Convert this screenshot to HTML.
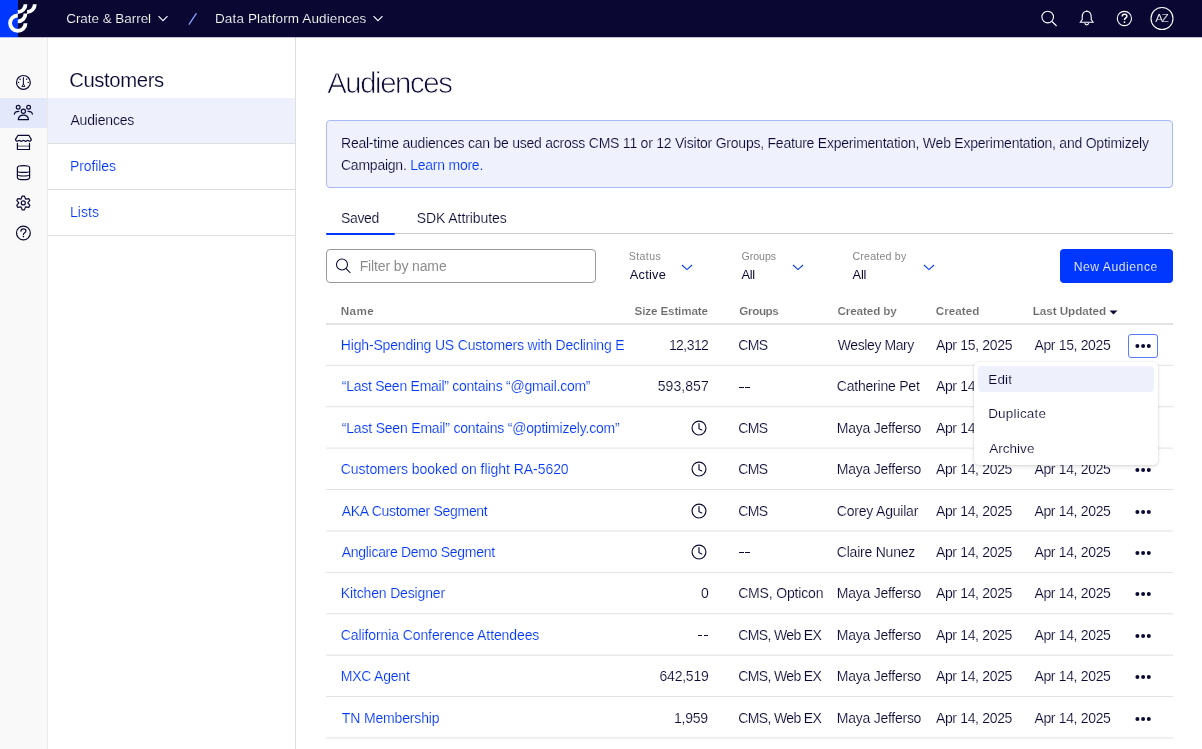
<!DOCTYPE html><html><head><meta charset="utf-8"><title>Audiences</title><style>
*{margin:0;padding:0;box-sizing:border-box}
body{will-change:transform}
html,body{width:1202px;height:749px;overflow:hidden;background:#fff;font-family:"Liberation Sans",sans-serif;position:relative}
.t{position:absolute;line-height:1;white-space:nowrap;-webkit-text-stroke:var(--sw,0.15px) var(--sc,#fff)}
.ab{position:absolute}
.hl{position:absolute;height:1px}
.clip{position:absolute;overflow:hidden}
#hdr{position:absolute;left:0;top:0;width:1202px;height:37px;background:#0a0833}
#logo{position:absolute;left:0;top:0;width:40px;height:37px;background:linear-gradient(90deg,#0037ff 0,#0037ff 18px,transparent 18px)}
#logo svg{position:absolute;left:0;top:0}
#rail{position:absolute;left:0;top:37px;width:48px;height:712px;background:#f9f9f9;border-right:1px solid #eaeaea}
#railsel{position:absolute;left:0;top:97.5px;width:47px;height:30px;background:#e4e8fb}
#side{position:absolute;left:48px;top:37px;width:248px;height:712px;background:#fff;border-right:1px solid #dedede}
#sidesel{position:absolute;left:48px;top:97.5px;width:247px;height:45px;background:#eef1fc}
#banner{position:absolute;left:326px;top:120px;width:847px;height:68px;background:#eff2fd;border:1px solid #a8b9f7;border-radius:4px}
#search{position:absolute;left:326px;top:249px;width:269.5px;height:34px;border:1px solid #9a9a9a;border-radius:4px;background:#fff}
#newbtn{position:absolute;left:1059.5px;top:249.3px;width:113.6px;height:33.5px;background:#0037ff;border-radius:4px}
#menu{position:absolute;left:974px;top:361.8px;width:184px;height:103.6px;background:#fff;border-radius:5px;box-shadow:0 0 0 1px rgba(0,0,0,0.035),0 2px 4px rgba(0,0,0,0.11)}
#menusel{position:absolute;left:3.6px;top:4px;width:176.5px;height:26px;background:#eef1fc;border-radius:4px}
</style></head><body><div id="hdr"></div><div class="hl" style="left:18px;top:37px;width:1184px;background:rgba(10,8,51,0.24);z-index:5"></div><div class="hl" style="left:0;top:37px;width:18px;background:rgba(0,55,255,0.3);z-index:5"></div>
<div id="logo"><svg width="40" height="37" viewBox="0 0 40 37"><g fill="none" stroke="#fff" stroke-width="3.8"><path d="M17.8 15.5 A7.7 7.7 0 1 0 25.5 23.2"/><path d="M17.8 21.3 A7.7 7.7 0 0 0 25.5 13.6"/><path d="M17.8 12.0 A7.7 7.7 0 0 0 25.5 4.3"/><path d="M27.1 12.0 A7.7 7.7 0 0 0 34.8 4.3"/></g></svg></div>
<div class="t" style="left:66.20px;top:11.87px;font-size:13.5px;letter-spacing:-0.046px;color:#fff;font-weight:400;--sc:#0a0833">Crate &amp; Barrel</div>
<svg class="ab" style="left:157px;top:14px" width="12" height="9" viewBox="0 0 12 9"><path d="M1.5 2.2 L6 6.7 L10.5 2.2" fill="none" stroke="#fff" stroke-width="1.1"/></svg>
<svg class="ab" style="left:187px;top:12px" width="12" height="14" viewBox="0 0 12 14"><path d="M2.2 12.2 L9.2 1.7" fill="none" stroke="#8aa2ff" stroke-width="1.3" stroke-linecap="round"/></svg>
<div class="t" style="left:215.00px;top:11.87px;font-size:13.5px;letter-spacing:0.123px;color:#fff;font-weight:400;--sc:#0a0833">Data Platform Audiences</div>
<svg class="ab" style="left:372px;top:14px" width="12" height="9" viewBox="0 0 12 9"><path d="M1.5 2.2 L6 6.7 L10.5 2.2" fill="none" stroke="#fff" stroke-width="1.1"/></svg>
<svg class="ab" style="left:1036px;top:4px" width="64" height="28" viewBox="1036 4 64 28"><g fill="none" stroke="#fff" stroke-width="1.1"><circle cx="1047.7" cy="17.05" r="5.8"/><path d="M1052 21.5 L1056.6 26"/><path d="M1086.7 11.2 C1083.3 11.2 1082.2 14 1082.2 17.5 L1082.2 19.5 L1080.3 22.3 L1093.1 22.3 L1091.2 19.5 L1091.2 17.5 C1091.2 14 1090.1 11.2 1086.7 11.2 Z"/><path d="M1084.9 23.1 A1.8 1.8 0 0 0 1088.5 23.1"/><path d="M1086.7 10.6 L1086.7 11.4" stroke-width="1.4"/></g></svg>
<svg class="ab" style="left:1110px;top:2px" width="70" height="34" viewBox="1110 2 70 34"><g fill="none" stroke="#fff" stroke-width="1.1"><circle cx="1124.4" cy="18.5" r="7.1"/><circle cx="1162" cy="18.5" r="11"/><path d="M1122.2 16.5 C1122.2 15 1123.1 14.3 1124.5 14.3 C1126 14.3 1126.9 15.1 1126.9 16.2 C1126.9 17.9 1124.5 18 1124.5 19.8 L1124.5 20.1" stroke-width="1.45"/></g><circle cx="1124.5" cy="22.1" r="0.95" fill="#fff"/></svg>
<div class="t" style="left:1155.30px;top:12.71px;font-size:11.8px;letter-spacing:-1.600px;color:#fff;font-weight:400;--sc:#0a0833">AZ</div>
<div id="rail"></div><div id="railsel"></div>
<svg class="ab" style="left:0;top:60px" width="47" height="190" viewBox="0 60 47 190"><g fill="none" stroke="#0a0933" stroke-width="1.2" stroke-linecap="round" stroke-linejoin="round"><circle cx="23.4" cy="82.4" r="6.9"/><path d="M23.4 77.6 L23.4 84.0" stroke-width="1.05"/><path d="M22.05 86.2 L23.4 84.0 L24.75 86.2 Z" stroke-width="0.9"/><circle cx="18.2" cy="107.3" r="1.9"/><circle cx="28.6" cy="107.3" r="1.9"/><circle cx="23.4" cy="111.3" r="2.1"/><path d="M14.4 114.1 C14.6 112.2 16.2 111.3 18.8 111.3"/><path d="M28 111.3 C30.6 111.3 32.2 112.2 32.4 114.1"/><path d="M18.3 119.6 C18.6 116.5 20.6 115.1 23.4 115.1 C26.2 115.1 28.2 116.5 28.5 119.6 Z"/><path d="M18 135.3 L28.8 135.3 L31.3 139.4 C31.2 140.6 30.3 141.4 29.1 141.2 C28.6 140.7 28.2 140.3 27.6 140.3 C27 140.3 26.6 141.3 25.6 141.3 C24.6 141.3 24.2 140.3 23.4 140.3 C22.6 140.3 22.2 141.3 21.2 141.3 C20.2 141.3 19.8 140.3 19.2 140.3 C18.6 140.3 18.2 140.7 17.7 141.2 C16.5 141.4 15.6 140.6 15.5 139.4 Z"/><path d="M17.4 143.4 L17.4 149.5 L29.5 149.5 L29.5 143.4"/><path d="M17.6 146.2 L29.3 146.2" stroke-opacity="0.55"/><path d="M17.4 167.5 C17.4 164.9 29.6 164.9 29.6 167.5 L29.6 177.7 C29.6 180.3 17.4 180.3 17.4 177.7 Z"/><path d="M17.4 171.2 C17.4 172.8 29.6 172.8 29.6 171.2"/><path d="M17.4 174.8 C17.4 176.4 29.6 176.4 29.6 174.8"/><path d="M22.20 196.04 L24.40 196.04 L25.55 199.05 L28.74 198.54 L29.84 200.44 L27.80 202.95 L29.84 205.46 L28.74 207.36 L25.55 206.85 L24.40 209.86 L22.20 209.86 L21.05 206.85 L17.86 207.36 L16.76 205.46 L18.80 202.95 L16.76 200.44 L17.86 198.54 L21.05 199.05 Z"/><circle cx="23.3" cy="202.9" r="2.0"/><circle cx="23.4" cy="233" r="6.9"/><path d="M20.9 231.2 C20.9 229.6 22 228.9 23.5 228.9 C25 228.9 25.9 229.8 25.9 230.9 C25.9 232.6 23.4 232.9 23.4 234.6"/></g><circle cx="20.1" cy="79.2" r="0.7" fill="#0a0933"/><circle cx="26.7" cy="79.2" r="0.7" fill="#0a0933"/><circle cx="18.6" cy="82.4" r="0.7" fill="#0a0933"/><circle cx="28.2" cy="82.4" r="0.7" fill="#0a0933"/><circle cx="23.4" cy="236.6" r="0.8" fill="#0a0933"/></svg>
<div id="side"></div><div id="sidesel"></div>
<div class="hl" style="left:48px;width:247px;top:142.5px;background:#dedede"></div>
<div class="hl" style="left:48px;width:247px;top:188.5px;background:#dedede"></div>
<div class="hl" style="left:48px;width:247px;top:234.5px;background:#dedede"></div>
<div class="t" style="left:69.20px;top:70.02px;font-size:20.3px;letter-spacing:-0.388px;color:#0a0933;font-weight:400;">Customers</div>
<div class="t" style="left:70.40px;top:113.15px;font-size:14px;letter-spacing:-0.175px;color:#0a0933;font-weight:400;--sc:#eef1fc">Audiences</div>
<div class="t" style="left:69.90px;top:159.15px;font-size:14px;letter-spacing:-0.071px;color:#0037ff;font-weight:400;">Profiles</div>
<div class="t" style="left:69.90px;top:205.05px;font-size:14px;letter-spacing:0.075px;color:#0037ff;font-weight:400;">Lists</div>
<div class="t" style="left:327.20px;top:67.70px;font-size:29.3px;letter-spacing:-1.400px;color:#0a0933;font-weight:400;--sw:0.75px">Audiences</div>
<div id="banner"></div>
<div class="t" style="left:341.00px;top:135.85px;font-size:14px;letter-spacing:-0.231px;color:#0a0933;font-weight:400;--sc:#eff2fd">Real-time audiences can be used across CMS 11 or 12 Visitor Groups, Feature Experimentation, Web Experimentation, and Optimizely</div>
<div class="t" style="left:341.00px;top:158.35px;font-size:14px;letter-spacing:-0.240px;color:#0a0933;font-weight:400;--sc:#eff2fd">Campaign. <span style="color:#0037ff">Learn more.</span></div>
<div class="t" style="left:341.00px;top:211.05px;font-size:14px;letter-spacing:-0.350px;color:#0a0933;font-weight:400;">Saved</div>
<div class="t" style="left:416.80px;top:211.05px;font-size:14px;letter-spacing:-0.085px;color:#0a0933;font-weight:400;">SDK Attributes</div>
<div class="hl" style="left:326px;width:847px;top:233px;background:#cfcfcf"></div>
<div class="ab" style="left:326px;width:69px;top:233px;height:2px;background:#0037ff;border-radius:1px"></div>
<div id="search"></div>
<svg class="ab" style="left:332px;top:255px" width="22" height="22" viewBox="332 255 22 22"><g fill="none" stroke="#0a0933" stroke-width="1.05"><circle cx="342" cy="264.5" r="5.5"/><path d="M345.9 268.4 L350.4 273"/></g></svg>
<div class="t" style="left:359.70px;top:259.25px;font-size:14px;letter-spacing:-0.131px;color:#8c8c8c;font-weight:400;--sw:0px">Filter by name</div>
<div class="t" style="left:628.70px;top:250.73px;font-size:10.6px;letter-spacing:0.420px;color:#868686;font-weight:400;--sw:0px">Status</div>
<div class="t" style="left:629.70px;top:269.26px;font-size:12.8px;letter-spacing:0.260px;color:#0a0933;font-weight:400;--sw:0px">Active</div>
<svg class="ab" style="left:681px;top:262px" width="12" height="9" viewBox="0 0 12 9"><path d="M1 3 L6 7.6 L11 3" fill="none" stroke="#0037ff" stroke-width="1.05"/></svg>
<div class="t" style="left:741.50px;top:250.73px;font-size:10.6px;letter-spacing:-0.020px;color:#868686;font-weight:400;--sw:0px">Groups</div>
<div class="t" style="left:741.50px;top:269.26px;font-size:12.8px;letter-spacing:-0.350px;color:#0a0933;font-weight:400;--sw:0px">All</div>
<svg class="ab" style="left:792px;top:262px" width="12" height="9" viewBox="0 0 12 9"><path d="M1 3 L6 7.6 L11 3" fill="none" stroke="#0037ff" stroke-width="1.05"/></svg>
<div class="t" style="left:852.50px;top:250.73px;font-size:10.6px;letter-spacing:0.211px;color:#868686;font-weight:400;--sw:0px">Created by</div>
<div class="t" style="left:852.50px;top:269.26px;font-size:12.8px;letter-spacing:-0.150px;color:#0a0933;font-weight:400;--sw:0px">All</div>
<svg class="ab" style="left:923px;top:262px" width="12" height="9" viewBox="0 0 12 9"><path d="M1 3 L6 7.6 L11 3" fill="none" stroke="#0037ff" stroke-width="1.05"/></svg>
<div id="newbtn"></div>
<div class="t" style="left:1073.70px;top:260.67px;font-size:12.2px;letter-spacing:0.518px;color:#fff;font-weight:400;--sc:#0037ff">New Audience</div>
<div class="t" style="left:340.80px;top:305.30px;font-size:11.7px;letter-spacing:0.333px;color:#6b6b6b;font-weight:700;">Name</div>
<div class="t" style="left:634.50px;top:305.30px;font-size:11.7px;letter-spacing:-0.150px;color:#6b6b6b;font-weight:700;">Size Estimate</div>
<div class="t" style="left:739.30px;top:305.30px;font-size:11.7px;letter-spacing:-0.400px;color:#6b6b6b;font-weight:700;">Groups</div>
<div class="t" style="left:837.50px;top:305.30px;font-size:11.7px;letter-spacing:-0.122px;color:#6b6b6b;font-weight:700;">Created by</div>
<div class="t" style="left:935.70px;top:305.30px;font-size:11.7px;letter-spacing:0.033px;color:#6b6b6b;font-weight:700;">Created</div>
<div class="t" style="left:1032.80px;top:305.30px;font-size:11.7px;letter-spacing:-0.073px;color:#6b6b6b;font-weight:700;">Last Updated</div>
<svg class="ab" style="left:1108px;top:308px" width="11" height="8" viewBox="0 0 11 8"><path d="M1.5 2.5 L9.5 2.5 L5.5 6.5 Z" fill="#0a0933"/></svg>
<div class="ab" style="left:326px;width:847px;top:323px;height:2px;background:#e3e3e3"></div>
<div class="hl" style="left:326px;width:847px;top:364px;background:rgba(0,0,0,0.023)"></div>
<div class="hl" style="left:326px;width:847px;top:365px;background:rgba(0,0,0,0.092)"></div>
<div class="clip" style="left:326px;width:299px;top:324.80px;height:35px"><div class="t" style="left:14.80px;top:13.15px;font-size:14px;letter-spacing:-0.171px;color:#0037ff;font-weight:400;">High-Spending US Customers with Declining Engagement</div></div>
<div class="t" style="left:668.90px;top:337.95px;font-size:14px;letter-spacing:-0.560px;color:#0a0933;font-weight:400;">12,312</div>
<div class="clip" style="left:723.5px;width:99px;top:324.80px;height:35px"><div class="t" style="left:14.70px;top:13.15px;font-size:14px;letter-spacing:-0.650px;color:#0a0933;font-weight:400;">CMS</div></div>
<div class="clip" style="left:822.5px;width:98px;top:324.80px;height:35px"><div class="t" style="left:15.30px;top:13.15px;font-size:14px;letter-spacing:-0.410px;color:#0a0933;font-weight:400;">Wesley Mary</div></div>
<div class="t" style="left:935.90px;top:337.95px;font-size:14px;letter-spacing:-0.327px;color:#0a0933;font-weight:400;">Apr 15, 2025</div>
<div class="t" style="left:1034.40px;top:337.95px;font-size:14px;letter-spacing:-0.345px;color:#0a0933;font-weight:400;">Apr 15, 2025</div>
<svg class="ab" style="left:1130px;top:340.90px" width="26" height="10" viewBox="1130 0 26 10"><g fill="#0a0933"><circle cx="1137.4" cy="5" r="2"/><circle cx="1143.1" cy="5" r="2"/><circle cx="1148.8" cy="5" r="2"/></g></svg>
<div class="hl" style="left:326px;width:847px;top:406px;background:rgba(0,0,0,0.091)"></div>
<div class="hl" style="left:326px;width:847px;top:407px;background:rgba(0,0,0,0.024)"></div>
<div class="clip" style="left:326px;width:299px;top:366.20px;height:35px"><div class="t" style="left:15.80px;top:13.15px;font-size:14px;letter-spacing:-0.258px;color:#0037ff;font-weight:400;">“Last Seen Email” contains “@gmail.com”</div></div>
<div class="t" style="left:657.70px;top:379.35px;font-size:14px;letter-spacing:0.067px;color:#0a0933;font-weight:400;">593,857</div>
<div class="ab" style="left:739.30px;top:387.00px;width:4.6px;height:1.1px;background:#0a0933"></div><div class="ab" style="left:745.30px;top:387.00px;width:4.6px;height:1.1px;background:#0a0933"></div>
<div class="clip" style="left:822.5px;width:98px;top:366.20px;height:35px"><div class="t" style="left:14.30px;top:13.15px;font-size:14px;letter-spacing:-0.217px;color:#0a0933;font-weight:400;">Catherine Pet</div></div>
<div class="t" style="left:935.90px;top:379.35px;font-size:14px;letter-spacing:-0.336px;color:#0a0933;font-weight:400;">Apr 14, 2025</div>
<div class="t" style="left:1034.40px;top:379.35px;font-size:14px;letter-spacing:-0.336px;color:#0a0933;font-weight:400;">Apr 14, 2025</div>
<svg class="ab" style="left:1130px;top:382.30px" width="26" height="10" viewBox="1130 0 26 10"><g fill="#0a0933"><circle cx="1137.4" cy="5" r="2"/><circle cx="1143.1" cy="5" r="2"/><circle cx="1148.8" cy="5" r="2"/></g></svg>
<div class="hl" style="left:326px;width:847px;top:447px;background:rgba(0,0,0,0.044)"></div>
<div class="hl" style="left:326px;width:847px;top:448px;background:rgba(0,0,0,0.071)"></div>
<div class="clip" style="left:326px;width:299px;top:407.60px;height:35px"><div class="t" style="left:15.80px;top:13.15px;font-size:14px;letter-spacing:-0.195px;color:#0037ff;font-weight:400;">“Last Seen Email” contains “@optimizely.com”</div></div>
<svg class="ab" style="left:689.45px;top:417.90px" width="20" height="20" viewBox="-10 -10 20 20"><g fill="none" stroke="#0a0933" stroke-width="1.15" stroke-linecap="round"><circle cx="0" cy="0" r="6.95"/><path d="M0 -4.5 L0 0.7 L2.8 2.0"/></g></svg>
<div class="clip" style="left:723.5px;width:99px;top:407.60px;height:35px"><div class="t" style="left:14.70px;top:13.15px;font-size:14px;letter-spacing:-0.650px;color:#0a0933;font-weight:400;">CMS</div></div>
<div class="clip" style="left:822.5px;width:98px;top:407.60px;height:35px"><div class="t" style="left:14.30px;top:13.15px;font-size:14px;letter-spacing:-0.255px;color:#0a0933;font-weight:400;">Maya Jefferson</div></div>
<div class="t" style="left:935.90px;top:420.75px;font-size:14px;letter-spacing:-0.336px;color:#0a0933;font-weight:400;">Apr 14, 2025</div>
<div class="t" style="left:1034.40px;top:420.75px;font-size:14px;letter-spacing:-0.336px;color:#0a0933;font-weight:400;">Apr 14, 2025</div>
<svg class="ab" style="left:1130px;top:423.70px" width="26" height="10" viewBox="1130 0 26 10"><g fill="#0a0933"><circle cx="1137.4" cy="5" r="2"/><circle cx="1143.1" cy="5" r="2"/><circle cx="1148.8" cy="5" r="2"/></g></svg>
<div class="hl" style="left:326px;width:847px;top:489px;background:rgba(0,0,0,0.112)"></div>
<div class="hl" style="left:326px;width:847px;top:490px;background:rgba(0,0,0,0.003)"></div>
<div class="clip" style="left:326px;width:299px;top:449.00px;height:35px"><div class="t" style="left:14.80px;top:13.15px;font-size:14px;letter-spacing:-0.052px;color:#0037ff;font-weight:400;">Customers booked on flight RA-5620</div></div>
<svg class="ab" style="left:689.45px;top:459.30px" width="20" height="20" viewBox="-10 -10 20 20"><g fill="none" stroke="#0a0933" stroke-width="1.15" stroke-linecap="round"><circle cx="0" cy="0" r="6.95"/><path d="M0 -4.5 L0 0.7 L2.8 2.0"/></g></svg>
<div class="clip" style="left:723.5px;width:99px;top:449.00px;height:35px"><div class="t" style="left:14.70px;top:13.15px;font-size:14px;letter-spacing:-0.650px;color:#0a0933;font-weight:400;">CMS</div></div>
<div class="clip" style="left:822.5px;width:98px;top:449.00px;height:35px"><div class="t" style="left:14.30px;top:13.15px;font-size:14px;letter-spacing:-0.255px;color:#0a0933;font-weight:400;">Maya Jefferson</div></div>
<div class="t" style="left:935.90px;top:462.15px;font-size:14px;letter-spacing:-0.336px;color:#0a0933;font-weight:400;">Apr 14, 2025</div>
<div class="t" style="left:1034.40px;top:462.15px;font-size:14px;letter-spacing:-0.336px;color:#0a0933;font-weight:400;">Apr 14, 2025</div>
<svg class="ab" style="left:1130px;top:465.10px" width="26" height="10" viewBox="1130 0 26 10"><g fill="#0a0933"><circle cx="1137.4" cy="5" r="2"/><circle cx="1143.1" cy="5" r="2"/><circle cx="1148.8" cy="5" r="2"/></g></svg>
<div class="hl" style="left:326px;width:847px;top:530px;background:rgba(0,0,0,0.064)"></div>
<div class="hl" style="left:326px;width:847px;top:531px;background:rgba(0,0,0,0.051)"></div>
<div class="clip" style="left:326px;width:299px;top:490.40px;height:35px"><div class="t" style="left:15.80px;top:13.15px;font-size:14px;letter-spacing:-0.305px;color:#0037ff;font-weight:400;">AKA Customer Segment</div></div>
<svg class="ab" style="left:689.45px;top:500.70px" width="20" height="20" viewBox="-10 -10 20 20"><g fill="none" stroke="#0a0933" stroke-width="1.15" stroke-linecap="round"><circle cx="0" cy="0" r="6.95"/><path d="M0 -4.5 L0 0.7 L2.8 2.0"/></g></svg>
<div class="clip" style="left:723.5px;width:99px;top:490.40px;height:35px"><div class="t" style="left:14.70px;top:13.15px;font-size:14px;letter-spacing:-0.650px;color:#0a0933;font-weight:400;">CMS</div></div>
<div class="clip" style="left:822.5px;width:98px;top:490.40px;height:35px"><div class="t" style="left:14.30px;top:13.15px;font-size:14px;letter-spacing:-0.208px;color:#0a0933;font-weight:400;">Corey Aguilar</div></div>
<div class="t" style="left:935.90px;top:503.55px;font-size:14px;letter-spacing:-0.336px;color:#0a0933;font-weight:400;">Apr 14, 2025</div>
<div class="t" style="left:1034.40px;top:503.55px;font-size:14px;letter-spacing:-0.336px;color:#0a0933;font-weight:400;">Apr 14, 2025</div>
<svg class="ab" style="left:1130px;top:506.50px" width="26" height="10" viewBox="1130 0 26 10"><g fill="#0a0933"><circle cx="1137.4" cy="5" r="2"/><circle cx="1143.1" cy="5" r="2"/><circle cx="1148.8" cy="5" r="2"/></g></svg>
<div class="hl" style="left:326px;width:847px;top:571px;background:rgba(0,0,0,0.017)"></div>
<div class="hl" style="left:326px;width:847px;top:572px;background:rgba(0,0,0,0.098)"></div>
<div class="clip" style="left:326px;width:299px;top:531.80px;height:35px"><div class="t" style="left:15.80px;top:13.15px;font-size:14px;letter-spacing:-0.300px;color:#0037ff;font-weight:400;">Anglicare Demo Segment</div></div>
<svg class="ab" style="left:689.45px;top:542.10px" width="20" height="20" viewBox="-10 -10 20 20"><g fill="none" stroke="#0a0933" stroke-width="1.15" stroke-linecap="round"><circle cx="0" cy="0" r="6.95"/><path d="M0 -4.5 L0 0.7 L2.8 2.0"/></g></svg>
<div class="ab" style="left:739.30px;top:552.00px;width:4.6px;height:1.1px;background:#0a0933"></div><div class="ab" style="left:745.30px;top:552.00px;width:4.6px;height:1.1px;background:#0a0933"></div>
<div class="clip" style="left:822.5px;width:98px;top:531.80px;height:35px"><div class="t" style="left:14.30px;top:13.15px;font-size:14px;letter-spacing:-0.218px;color:#0a0933;font-weight:400;">Claire Nunez</div></div>
<div class="t" style="left:935.90px;top:544.95px;font-size:14px;letter-spacing:-0.336px;color:#0a0933;font-weight:400;">Apr 14, 2025</div>
<div class="t" style="left:1034.40px;top:544.95px;font-size:14px;letter-spacing:-0.336px;color:#0a0933;font-weight:400;">Apr 14, 2025</div>
<svg class="ab" style="left:1130px;top:547.90px" width="26" height="10" viewBox="1130 0 26 10"><g fill="#0a0933"><circle cx="1137.4" cy="5" r="2"/><circle cx="1143.1" cy="5" r="2"/><circle cx="1148.8" cy="5" r="2"/></g></svg>
<div class="hl" style="left:326px;width:847px;top:613px;background:rgba(0,0,0,0.085)"></div>
<div class="hl" style="left:326px;width:847px;top:614px;background:rgba(0,0,0,0.030)"></div>
<div class="clip" style="left:326px;width:299px;top:573.20px;height:35px"><div class="t" style="left:14.80px;top:13.15px;font-size:14px;letter-spacing:-0.153px;color:#0037ff;font-weight:400;">Kitchen Designer</div></div>
<div class="t" style="left:701.10px;top:586.35px;font-size:14px;letter-spacing:-0.247px;color:#0a0933;font-weight:400;">0</div>
<div class="clip" style="left:723.5px;width:99px;top:573.20px;height:35px"><div class="t" style="left:14.70px;top:13.15px;font-size:14px;letter-spacing:-0.173px;color:#0a0933;font-weight:400;">CMS, Opticon</div></div>
<div class="clip" style="left:822.5px;width:98px;top:573.20px;height:35px"><div class="t" style="left:14.30px;top:13.15px;font-size:14px;letter-spacing:-0.255px;color:#0a0933;font-weight:400;">Maya Jefferson</div></div>
<div class="t" style="left:935.90px;top:586.35px;font-size:14px;letter-spacing:-0.336px;color:#0a0933;font-weight:400;">Apr 14, 2025</div>
<div class="t" style="left:1034.40px;top:586.35px;font-size:14px;letter-spacing:-0.336px;color:#0a0933;font-weight:400;">Apr 14, 2025</div>
<svg class="ab" style="left:1130px;top:589.30px" width="26" height="10" viewBox="1130 0 26 10"><g fill="#0a0933"><circle cx="1137.4" cy="5" r="2"/><circle cx="1143.1" cy="5" r="2"/><circle cx="1148.8" cy="5" r="2"/></g></svg>
<div class="hl" style="left:326px;width:847px;top:654px;background:rgba(0,0,0,0.038)"></div>
<div class="hl" style="left:326px;width:847px;top:655px;background:rgba(0,0,0,0.077)"></div>
<div class="clip" style="left:326px;width:299px;top:614.60px;height:35px"><div class="t" style="left:14.80px;top:13.15px;font-size:14px;letter-spacing:-0.100px;color:#0037ff;font-weight:400;">California Conference Attendees</div></div>
<div class="ab" style="left:697.60px;top:635.00px;width:4.6px;height:1.1px;background:#0a0933"></div><div class="ab" style="left:703.60px;top:635.00px;width:4.6px;height:1.1px;background:#0a0933"></div>
<div class="clip" style="left:723.5px;width:99px;top:614.60px;height:35px"><div class="t" style="left:14.70px;top:13.15px;font-size:14px;letter-spacing:-0.630px;color:#0a0933;font-weight:400;">CMS, Web EX</div></div>
<div class="clip" style="left:822.5px;width:98px;top:614.60px;height:35px"><div class="t" style="left:14.30px;top:13.15px;font-size:14px;letter-spacing:-0.255px;color:#0a0933;font-weight:400;">Maya Jefferson</div></div>
<div class="t" style="left:935.90px;top:627.75px;font-size:14px;letter-spacing:-0.336px;color:#0a0933;font-weight:400;">Apr 14, 2025</div>
<div class="t" style="left:1034.40px;top:627.75px;font-size:14px;letter-spacing:-0.336px;color:#0a0933;font-weight:400;">Apr 14, 2025</div>
<svg class="ab" style="left:1130px;top:630.70px" width="26" height="10" viewBox="1130 0 26 10"><g fill="#0a0933"><circle cx="1137.4" cy="5" r="2"/><circle cx="1143.1" cy="5" r="2"/><circle cx="1148.8" cy="5" r="2"/></g></svg>
<div class="hl" style="left:326px;width:847px;top:696px;background:rgba(0,0,0,0.106)"></div>
<div class="hl" style="left:326px;width:847px;top:697px;background:rgba(0,0,0,0.009)"></div>
<div class="clip" style="left:326px;width:299px;top:656.00px;height:35px"><div class="t" style="left:14.80px;top:13.15px;font-size:14px;letter-spacing:-0.225px;color:#0037ff;font-weight:400;">MXC Agent</div></div>
<div class="t" style="left:659.58px;top:669.15px;font-size:14px;letter-spacing:-0.247px;color:#0a0933;font-weight:400;">642,519</div>
<div class="clip" style="left:723.5px;width:99px;top:656.00px;height:35px"><div class="t" style="left:14.70px;top:13.15px;font-size:14px;letter-spacing:-0.630px;color:#0a0933;font-weight:400;">CMS, Web EX</div></div>
<div class="clip" style="left:822.5px;width:98px;top:656.00px;height:35px"><div class="t" style="left:14.30px;top:13.15px;font-size:14px;letter-spacing:-0.255px;color:#0a0933;font-weight:400;">Maya Jefferson</div></div>
<div class="t" style="left:935.90px;top:669.15px;font-size:14px;letter-spacing:-0.336px;color:#0a0933;font-weight:400;">Apr 14, 2025</div>
<div class="t" style="left:1034.40px;top:669.15px;font-size:14px;letter-spacing:-0.336px;color:#0a0933;font-weight:400;">Apr 14, 2025</div>
<svg class="ab" style="left:1130px;top:672.10px" width="26" height="10" viewBox="1130 0 26 10"><g fill="#0a0933"><circle cx="1137.4" cy="5" r="2"/><circle cx="1143.1" cy="5" r="2"/><circle cx="1148.8" cy="5" r="2"/></g></svg>
<div class="hl" style="left:326px;width:847px;top:737px;background:rgba(0,0,0,0.059)"></div>
<div class="hl" style="left:326px;width:847px;top:738px;background:rgba(0,0,0,0.056)"></div>
<div class="clip" style="left:326px;width:299px;top:697.40px;height:35px"><div class="t" style="left:15.80px;top:13.15px;font-size:14px;letter-spacing:-0.150px;color:#0037ff;font-weight:400;">TN Membership</div></div>
<div class="t" style="left:674.09px;top:710.55px;font-size:14px;letter-spacing:-0.247px;color:#0a0933;font-weight:400;">1,959</div>
<div class="clip" style="left:723.5px;width:99px;top:697.40px;height:35px"><div class="t" style="left:14.70px;top:13.15px;font-size:14px;letter-spacing:-0.630px;color:#0a0933;font-weight:400;">CMS, Web EX</div></div>
<div class="clip" style="left:822.5px;width:98px;top:697.40px;height:35px"><div class="t" style="left:14.30px;top:13.15px;font-size:14px;letter-spacing:-0.255px;color:#0a0933;font-weight:400;">Maya Jefferson</div></div>
<div class="t" style="left:935.90px;top:710.55px;font-size:14px;letter-spacing:-0.336px;color:#0a0933;font-weight:400;">Apr 14, 2025</div>
<div class="t" style="left:1034.40px;top:710.55px;font-size:14px;letter-spacing:-0.336px;color:#0a0933;font-weight:400;">Apr 14, 2025</div>
<svg class="ab" style="left:1130px;top:713.50px" width="26" height="10" viewBox="1130 0 26 10"><g fill="#0a0933"><circle cx="1137.4" cy="5" r="2"/><circle cx="1143.1" cy="5" r="2"/><circle cx="1148.8" cy="5" r="2"/></g></svg>
<div class="ab" style="left:1128px;top:334px;width:30px;height:24px;border:1px solid #5a7bff;border-radius:3px"></div>
<div id="menu"><div id="menusel"></div></div>
<div class="t" style="left:988.20px;top:372.97px;font-size:13.5px;letter-spacing:0.200px;color:#0a0933;font-weight:400;--sc:#eef1fc">Edit</div>
<div class="t" style="left:988.20px;top:407.47px;font-size:13.5px;letter-spacing:0.188px;color:#0a0933;font-weight:400;">Duplicate</div>
<div class="t" style="left:989.20px;top:442.27px;font-size:13.5px;letter-spacing:0.033px;color:#0a0933;font-weight:400;">Archive</div></body></html>
